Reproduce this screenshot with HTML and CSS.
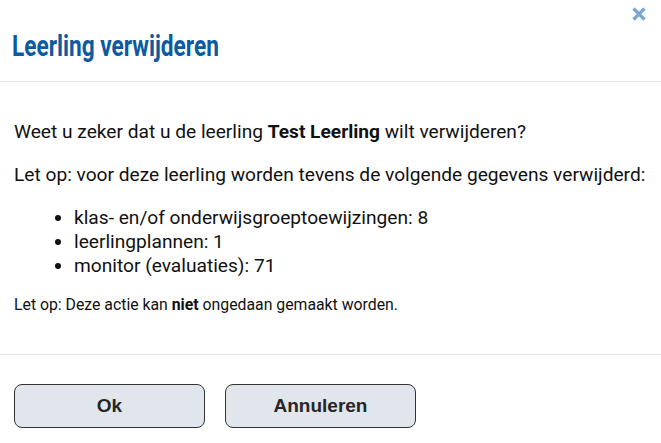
FILE: index.html
```html
<!DOCTYPE html>
<html lang="nl">
  <head>
    <meta charset="UTF-8" />
    <title>Leerling verwijderen</title>
    <link rel="stylesheet" href="styles.css">
  </head>
  <body>
    <div class="dialog">
      <div class="dialog-header">
        <h1><span>Leerling verwijderen</span></h1>
        <button class="close-btn" aria-label="Sluiten">
          <svg width="16" height="16" viewBox="0 0 16 16">
            <path d="M2.5 2.5 L13.5 13.5 M13.5 2.5 L2.5 13.5" stroke="#7ba7d2" stroke-width="3.2" stroke-linecap="butt" />
          </svg>
        </button>
      </div>

      <div class="dialog-body">
        <p>Weet u zeker dat u de leerling <b>Test Leerling</b> wilt verwijderen?</p>
        <p>Let op: voor deze leerling worden tevens de volgende gegevens verwijderd:</p>
        <ul>
          <li>klas- en/of onderwijsgroeptoewijzingen: 8</li>
          <li>leerlingplannen: 1</li>
          <li>monitor (evaluaties): 71</li>
        </ul>
        <p class="note">Let op: Deze actie kan <b>niet</b> ongedaan gemaakt worden.</p>
      </div>

      <div class="dialog-footer">
        <button class="btn">Ok</button>
        <button class="btn">Annuleren</button>
      </div>
    </div>
  </body>
</html>
```

FILE: styles.css
```css
body {
  margin: 0;
  font-family: Roboto, "Liberation Sans", sans-serif;
  color: #111;
  background: #fff;
}
.dialog {
  position: relative;
  width: 661px;
}
.dialog-header {
  height: 82px;
  padding: 0 12px;
  display: flex;
  align-items: center;
  border-bottom: 1px solid #e6e6e6;
  box-sizing: border-box;
}
.dialog-header h1 {
  margin: 10px 0 0;
  font-size: 30px;
  font-weight: 700;
  color: #0b5aa2;
  white-space: nowrap;
}
.dialog-header h1 span {
  display: inline-block;
  transform: scaleX(0.755);
  transform-origin: left center;
}
.close-btn {
  position: absolute;
  top: 6px;
  right: 14px;
  padding: 0;
  border: none;
  background: none;
  cursor: pointer;
}
.dialog-body {
  padding: 38px 14px 39px;
  font-size: 19.15px;
  line-height: 24px;
}
.dialog-body p {
  margin: 0 0 19px;
}
.dialog-body ul {
  margin: 0 0 17px;
  padding-left: 60px;
}
.dialog-body .note {
  font-size: 15.8px;
  line-height: 20px;
  margin: 0;
}
.dialog-footer {
  border-top: 1px solid #e6e6e6;
  padding: 29px 14px;
  display: flex;
  gap: 20px;
}
.btn {
  width: 191px;
  height: 44px;
  background: #e1e5ec;
  border: 1px solid #333;
  border-radius: 8px;
  font-family: "Liberation Sans", Arial, sans-serif;
  font-size: 19px;
  font-weight: 700;
  color: #262626;
}
```
